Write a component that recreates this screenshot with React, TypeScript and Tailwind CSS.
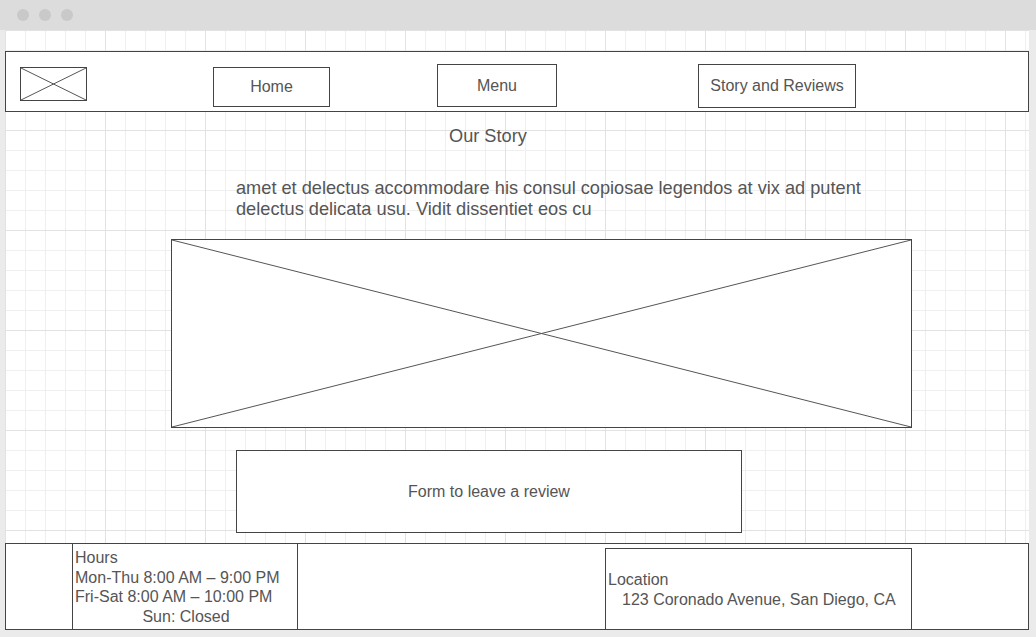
import React from "react";

function XBox({ className }: { className: string }) {
  return (
    <div className={`border border-[#444] bg-white relative ${className}`}>
      <svg className="absolute inset-0 w-full h-full" preserveAspectRatio="none" viewBox="0 0 100 100">
        <line x1="0" y1="0" x2="100" y2="100" stroke="#555" strokeWidth="1" vectorEffect="non-scaling-stroke" />
        <line x1="100" y1="0" x2="0" y2="100" stroke="#555" strokeWidth="1" vectorEffect="non-scaling-stroke" />
      </svg>
    </div>
  );
}

export default function App() {
  return (
    <div className="w-[1036px] h-[637px] bg-[#ebebeb] overflow-hidden text-[#555] font-['Liberation_Sans',Arial,sans-serif]">
      <div className="h-[30px] bg-[#dcdcdc] flex items-center gap-[10px] pl-[17px]">
        <div className="w-[12px] h-[12px] rounded-full bg-[#c9c9c9]" />
        <div className="w-[12px] h-[12px] rounded-full bg-[#c9c9c9]" />
        <div className="w-[12px] h-[12px] rounded-full bg-[#c9c9c9]" />
      </div>
      <div className="ml-[5px] w-[1024px] h-[600px] bg-white bg-[linear-gradient(to_right,#e2e2e2_1px,transparent_1px),linear-gradient(to_bottom,#e2e2e2_1px,transparent_1px),linear-gradient(to_right,#efefef_1px,transparent_1px),linear-gradient(to_bottom,#efefef_1px,transparent_1px)] bg-[size:100px_100px,100px_100px,20px_20px,20px_20px] flex flex-col">
        {/* header */}
        <div className="mt-[21px] h-[61px] w-[1024px] border border-[#444] bg-white flex items-start">
          <XBox className="ml-[14px] mt-[15px] w-[67px] h-[34px]" />
          <div className="ml-[126px] mt-[15px] w-[117px] h-[40px] border border-[#444] flex items-center justify-center text-[16px]">Home</div>
          <div className="ml-[107px] mt-[12px] w-[120px] h-[43px] border border-[#444] flex items-center justify-center text-[16px]">Menu</div>
          <div className="ml-[141px] mt-[12px] w-[158px] h-[44px] border border-[#444] flex items-center justify-center text-[16px]">Story and Reviews</div>
        </div>
        {/* Our story */}
        <div className="mt-[14px] ml-[444px] text-[18.2px] leading-[20px]">Our Story</div>
        <div className="mt-[32px] ml-[231px] w-[645px] text-[18.2px] leading-[21px]">
          amet et delectus accommodare his consul copiosae legendos at vix ad putent delectus delicata usu. Vidit dissentiet eos cu
        </div>
        <XBox className="mt-[19px] ml-[166px] w-[741px] h-[189px]" />
        <div className="mt-[22px] ml-[231px] w-[506px] h-[83px] border border-[#444] bg-white flex items-center justify-center text-[16px]">
          Form to leave a review
        </div>
        <div className="mt-[10px] w-[1024px] h-[87px] border border-[#444] bg-white flex items-start">
          <div className="ml-[66px] w-[226px] h-full border-l border-r border-[#444] pt-[4px] pl-[2px] text-[16px] leading-[19.5px]">
            <div>Hours</div>
            <div>Mon-Thu 8:00 AM – 9:00 PM</div>
            <div>Fri-Sat 8:00 AM – 10:00 PM</div>
            <div className="text-center">Sun: Closed</div>
          </div>
          <div className="ml-[307px] mt-[4px] w-[307px] h-[81px] border-l border-r border-t border-[#444] pt-[21px] pl-[2px] text-[16px] leading-[20px]">
            <div>Location</div>
            <div className="pl-[14px]">123 Coronado Avenue, San Diego, CA</div>
          </div>
        </div>
      </div>
    </div>
  );
}
